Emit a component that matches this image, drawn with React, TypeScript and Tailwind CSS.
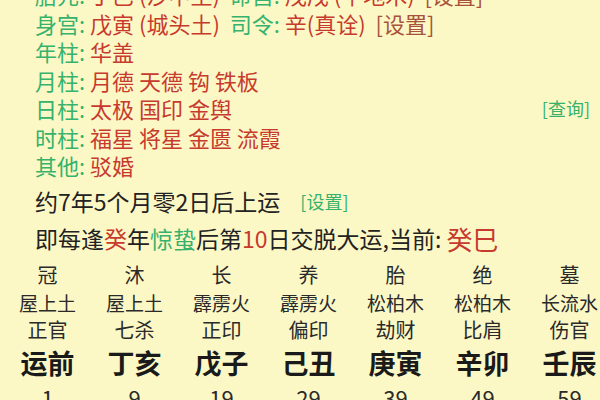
import React from "react";

const green = "text-[#35b26c]";
const red = "text-[#c73a2e]";
const brown = "text-[#a9533c]";

type Seg = { t: string; c?: string };

const infoLines: { segs: Seg[]; right?: string }[] = [
  {
    segs: [
      { t: "胎元: ", c: green },
      { t: "丁巳 (沙中土) ", c: red },
      { t: " 命宫: ", c: green },
      { t: "戊戌 (平地木) ", c: red },
      { t: " [设置]", c: brown },
    ],
  },
  {
    segs: [
      { t: "身宫: ", c: green },
      { t: "戊寅 (城头土) ", c: red },
      { t: " 司令: ", c: green },
      { t: "辛(真诠) ", c: red },
      { t: " [设置]", c: brown },
    ],
  },
  { segs: [{ t: "年柱: ", c: green }, { t: "华盖", c: red }] },
  { segs: [{ t: "月柱: ", c: green }, { t: "月德 天德 钩 铁板", c: red }] },
  { segs: [{ t: "日柱: ", c: green }, { t: "太极 国印 金舆", c: red }], right: "[查询]" },
  { segs: [{ t: "时柱: ", c: green }, { t: "福星 将星 金匮 流霞", c: red }] },
  { segs: [{ t: "其他: ", c: green }, { t: "驳婚", c: red }] },
];

const columns = [
  { stage: "冠", nayin: "屋上土", god: "正官", pillar: "运前", age: "1" },
  { stage: "沐", nayin: "屋上土", god: "七杀", pillar: "丁亥", age: "9" },
  { stage: "长", nayin: "霹雳火", god: "正印", pillar: "戊子", age: "19" },
  { stage: "养", nayin: "霹雳火", god: "偏印", pillar: "己丑", age: "29" },
  { stage: "胎", nayin: "松柏木", god: "劫财", pillar: "庚寅", age: "39" },
  { stage: "绝", nayin: "松柏木", god: "比肩", pillar: "辛卯", age: "49" },
  { stage: "墓", nayin: "长流水", god: "伤官", pillar: "壬辰", age: "59" },
];

export default function App() {
  return (
    <div
      className="w-[600px] h-[400px] overflow-hidden bg-[#fcf8c6] text-[#222]"
      style={{ fontFamily: '"Noto Sans CJK SC", "Noto Sans", sans-serif' }}
    >
      <div className="pl-[35px] mt-[-20px]">
        {infoLines.map((line, i) => (
          <div key={i} className="flex items-center justify-between pr-[10px] h-[28.5px] text-[22px] leading-[28.5px] whitespace-pre">
            <div>
              {line.segs.map((s, j) => (
                <span key={j} className={s.c}>
                  {s.t}
                </span>
              ))}
            </div>
            {line.right && <span className={`${green} text-[18px]`}>{line.right}</span>}
          </div>
        ))}

        <div className="mt-[3px] h-[37px] flex items-center text-[23px] whitespace-pre">
          <span>约7年5个月零2日后上运</span>
          <span className={`${green} text-[18px] ml-[20px]`}>[设置]</span>
        </div>
        <div className="h-[37px] flex items-center text-[23px] whitespace-pre">
          <span>即每逢</span>
          <span className={red}>癸</span>
          <span>年</span>
          <span className={green}>惊蛰</span>
          <span>后第</span>
          <span className={red}>10</span>
          <span>日交脱大运,当前: </span>
          <span className={`${red} text-[26px]`}>癸巳</span>
        </div>
      </div>

      <div className="pl-[4px] grid grid-cols-[repeat(7,87px)] text-center text-[#2a2a2a]">
        {columns.map((c, i) => (
          <div key={i} className="flex flex-col items-center">
            <div className="h-[35px] leading-[35px] text-[20px]">{c.stage}</div>
            <div className="h-[21px] leading-[21px] text-[19px]">{c.nayin}</div>
            <div className="h-[33px] leading-[33px] text-[20px]">{c.god}</div>
            <div className="h-[33px] leading-[33px] text-[27px] font-bold text-[#1a1a1a]">{c.pillar}</div>
            <div className="h-[37px] leading-[37px] text-[22px]">{c.age}</div>
          </div>
        ))}
      </div>
    </div>
  );
}
